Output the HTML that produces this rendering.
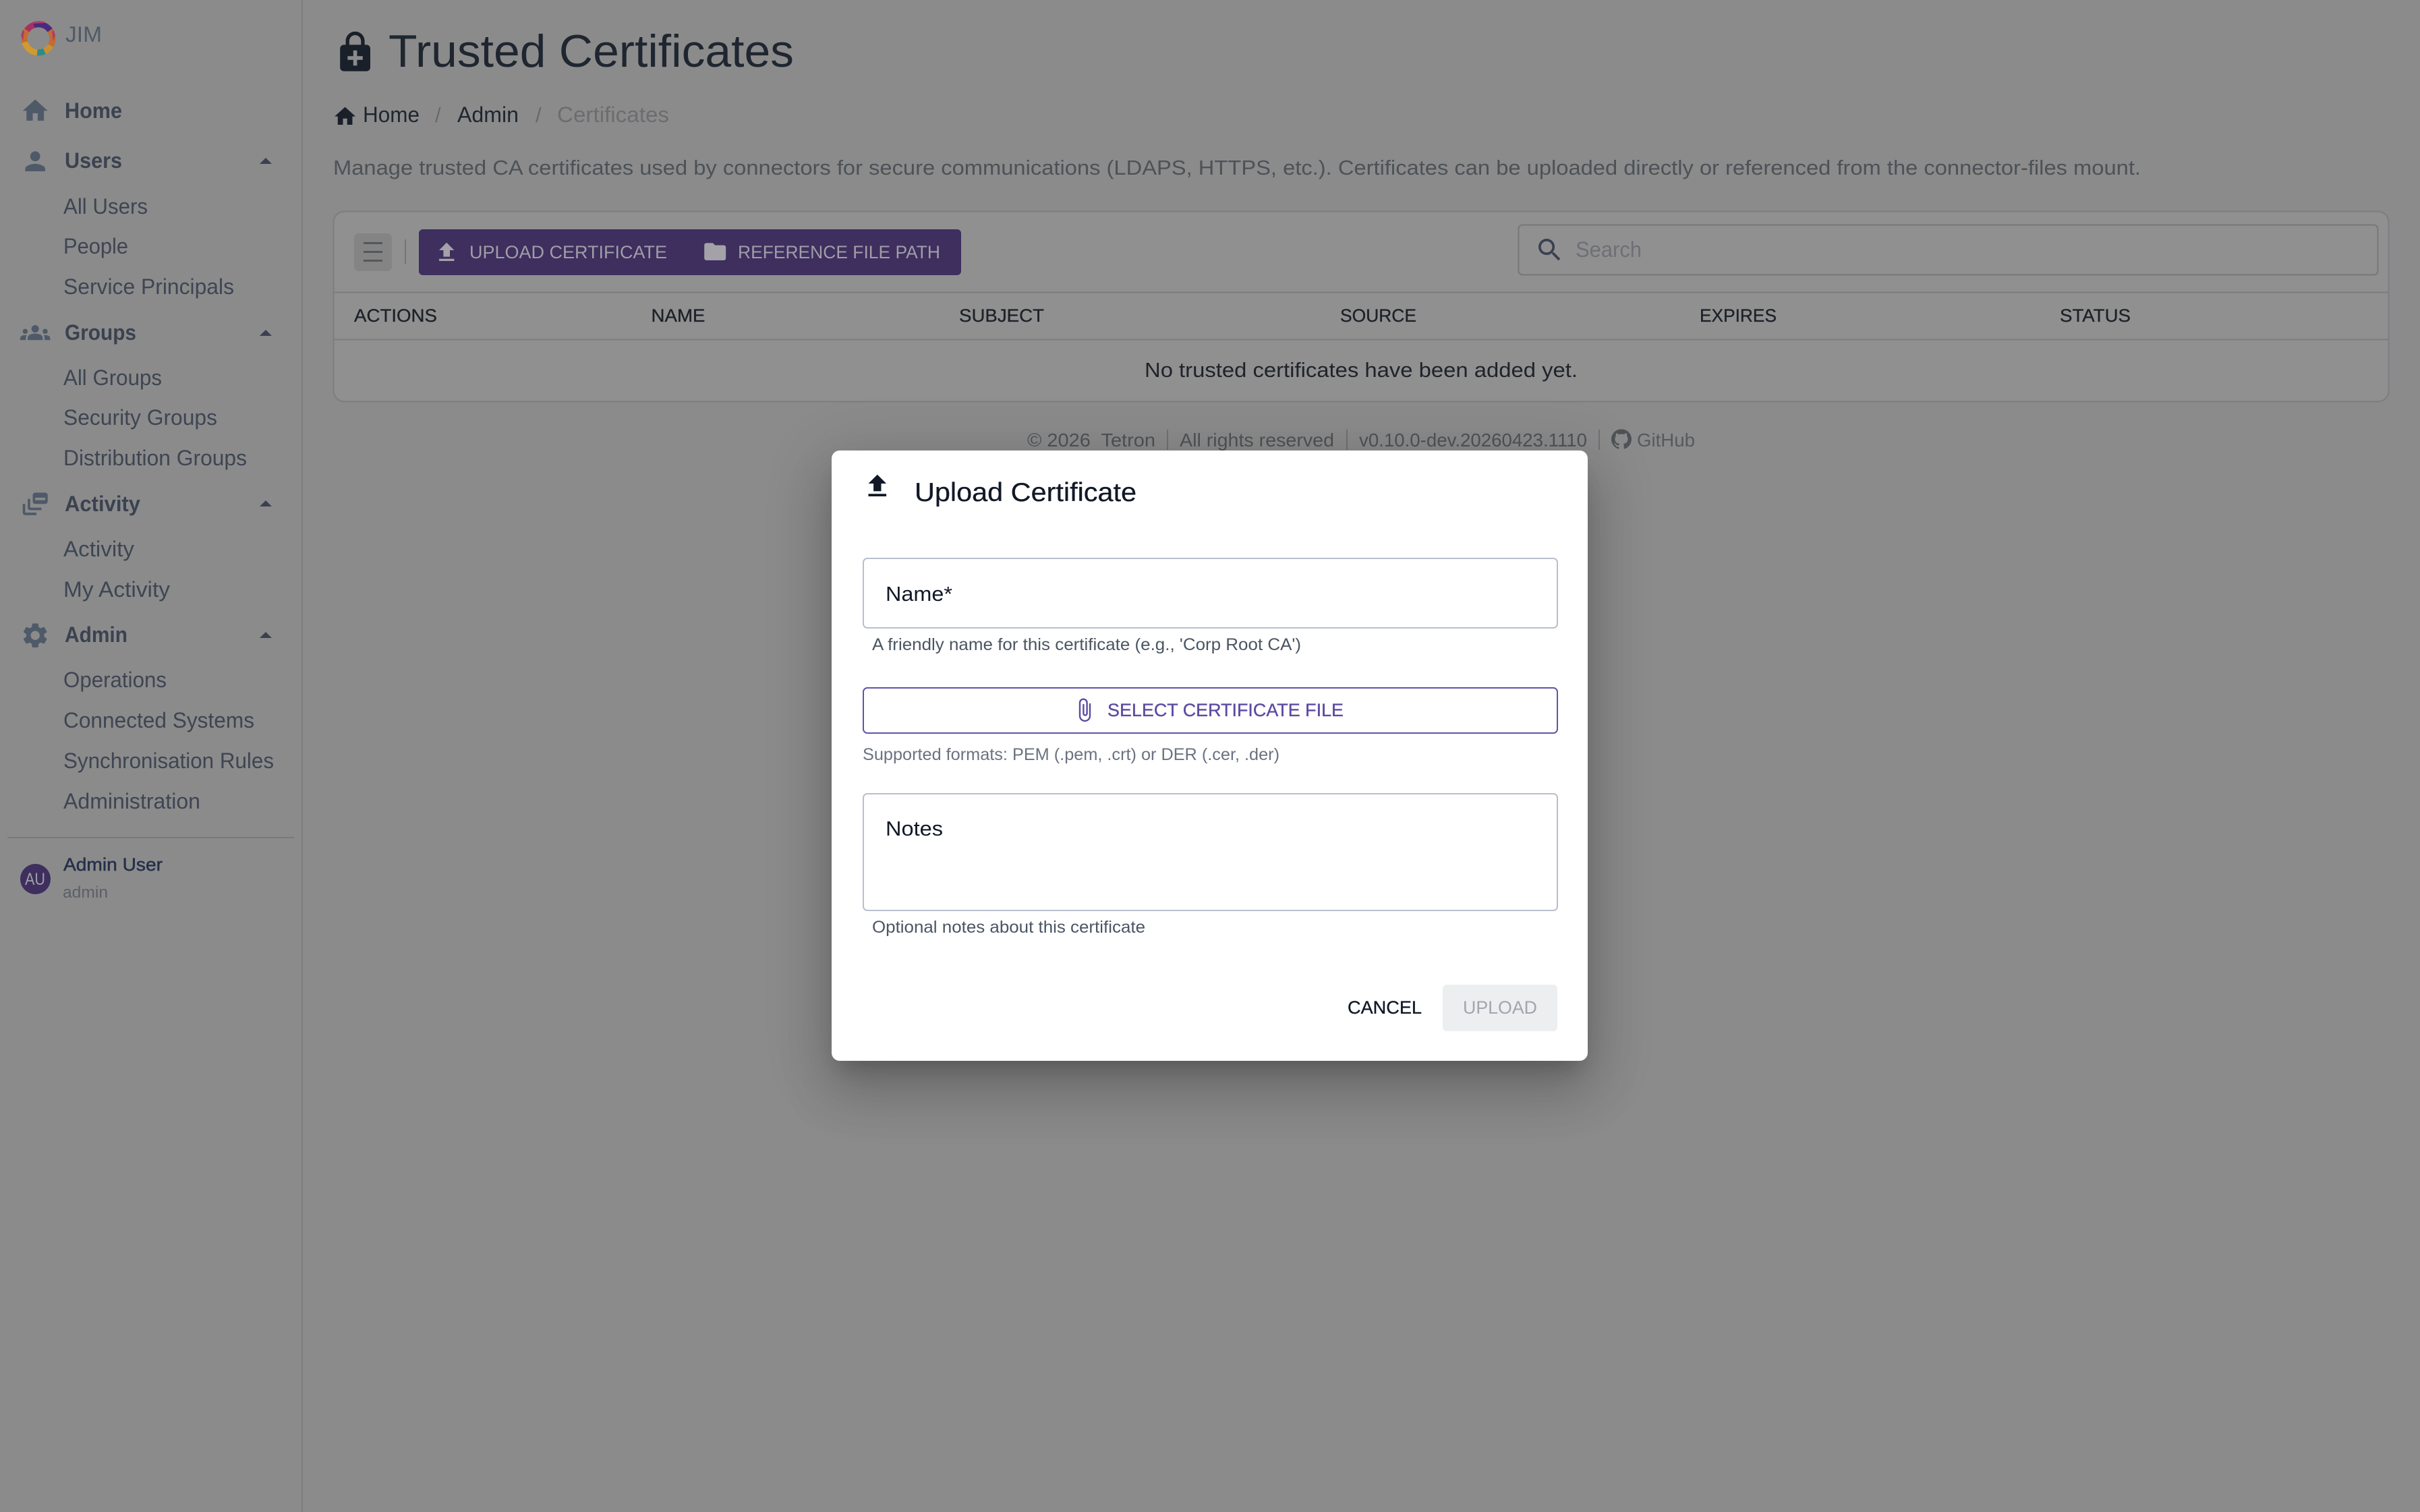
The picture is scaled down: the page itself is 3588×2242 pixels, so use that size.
<!DOCTYPE html>
<html lang="en">
<head>
<meta charset="utf-8">
<title>Trusted Certificates</title>
<style>
html,body{margin:0;padding:0;width:3588px;height:2242px;overflow:hidden;background:#8b8b8b}
svg{position:absolute;left:0;top:0;display:block}
text{font-family:"Liberation Sans",Arial,sans-serif;white-space:pre}
.modal{position:absolute;left:1233px;top:668px;width:1121px;height:905px;background:#fff;border-radius:12px;box-shadow:0 22px 30px -14px rgba(0,0,0,.2),0 48px 76px 6px rgba(0,0,0,.14),0 18px 92px 16px rgba(0,0,0,.12)}
.modal svg{left:-1233px;top:-668px}
.n{font-size:32px;fill:#3e4553}
.h{font-size:32px;font-weight:700;fill:#3b4250}
.i{fill:#4f5a68}
.c{fill:#3a4050}
.th{font-size:27px;fill:#1d2128;stroke:#1d2128;stroke-width:.35}
.ft{font-size:28px;fill:#4f5357}
.bt{font-size:27px;fill:#a09da6}
</style>
</head>
<body>
<svg width="3588" height="2242" viewBox="0 0 3588 2242" xmlns="http://www.w3.org/2000/svg">
  <rect width="3588" height="2242" fill="#8b8b8b"/>
  <g id="sidebar">
    <rect x="447" y="0" width="2" height="2242" fill="#7b7d82"/>
    <g fill="none" stroke-width="9">
      <path d="M49.800 37.300 A21 21 0 0 1 74.200 45" stroke="#4a2a80"/>
      <path d="M74.200 45 A21 21 0 0 1 75.200 67.500" stroke="#c46a35"/>
      <path d="M75.200 67.500 A21 21 0 0 1 65.900 76" stroke="#c8922f"/>
      <path d="M65.900 76 A21 21 0 0 1 55.200 77.900" stroke="#2f8a8a"/>
      <path d="M55.200 77.900 A21 21 0 0 1 36.700 62.400" stroke="#d09a30"/>
      <path d="M36.700 62.400 A21 21 0 0 1 39.800 45" stroke="#c86a30"/>
      <path d="M39.800 45 A21 21 0 0 1 49.800 37.300" stroke="#a8305f"/>
    </g>
    <path d="M47 33q9-3 18-1l3 2-21 1zM31 52l3-8 2 3-2 14zM82 52l-3-8-2 3 2 14z" fill="#a8406a"/>
    <text x="97" y="62" font-size="32" fill="#4f5a68" textLength="54" lengthAdjust="spacingAndGlyphs">JIM</text>

    <path class="i" transform="translate(30 142) scale(1.85)" d="M10 20v-6h4v6h5v-8h3L12 3 2 12h3v8z"/>
    <text class="h" x="96" y="175" textLength="85" lengthAdjust="spacingAndGlyphs">Home</text>

    <path class="i" transform="translate(30 217) scale(1.85)" d="M12 12c2.21 0 4-1.79 4-4s-1.79-4-4-4-4 1.79-4 4 1.790 4 4 4zm0 2c-2.67 0-8 1.34-8 4v2h16v-2c0-2.66-5.33-4-8-4z"/>
    <text class="h" x="96" y="249" textLength="85" lengthAdjust="spacingAndGlyphs">Users</text>
    <path class="c" d="M385 243l9-9 9 9z"/>
    <text class="n" x="94" y="317" textLength="125" lengthAdjust="spacingAndGlyphs">All Users</text>
    <text class="n" x="94" y="376" textLength="96" lengthAdjust="spacingAndGlyphs">People</text>
    <text class="n" x="94" y="436" textLength="253" lengthAdjust="spacingAndGlyphs">Service Principals</text>

    <path class="i" transform="translate(30 471) scale(1.85)" d="M12 12.75c1.63 0 3.07.39 4.24.9 1.08.48 1.76 1.56 1.76 2.73V18H6v-1.61c0-1.18.68-2.26 1.76-2.73 1.17-.52 2.61-.91 4.24-.91zM4 13c1.1 0 2-.9 2-2s-.9-2-2-2-2 .9-2 2 .9 2 2 2zm1.13 1.1c-.37-.06-.74-.1-1.13-.1-.99 0-1.93.21-2.78.58C.48 14.9 0 15.62 0 16.43V18h4.5v-1.61c0-.83.23-1.61.63-2.29zM20 13c1.1 0 2-.9 2-2s-.9-2-2-2-2 .9-2 2 .9 2 2 2zm4 3.43c0-.81-.48-1.53-1.22-1.85-.85-.37-1.79-.58-2.78-.58-.39 0-.76.04-1.13.1.4.68.63 1.46.63 2.29V18H24v-1.57zM12 6c1.66 0 3 1.34 3 3s-1.34 3-3 3-3-1.34-3-3 1.34-3 3-3z"/>
    <text class="h" x="96" y="504" textLength="106" lengthAdjust="spacingAndGlyphs">Groups</text>
    <path class="c" d="M385 498l9-9 9 9z"/>
    <text class="n" x="94" y="571" textLength="146" lengthAdjust="spacingAndGlyphs">All Groups</text>
    <text class="n" x="94" y="630" textLength="228" lengthAdjust="spacingAndGlyphs">Security Groups</text>
    <text class="n" x="94" y="690" textLength="272" lengthAdjust="spacingAndGlyphs">Distribution Groups</text>

    <path class="i" transform="translate(30 725) scale(1.85)" d="M8 8H6v7c0 1.1.9 2 2 2h9v-2H8V8zm12-5h-8c-1.1 0-2 .9-2 2v5c0 1.1.9 2 2 2h8c1.1 0 2-.9 2-2V5c0-1.1-.9-2-2-2zm0 6h-8V7h8v2zM4 12H2v7c0 1.1.9 2 2 2h9v-2H4v-7z"/>
    <text class="h" x="96" y="758" textLength="112" lengthAdjust="spacingAndGlyphs">Activity</text>
    <path class="c" d="M385 751l9-9 9 9z"/>
    <text class="n" x="94" y="825" textLength="105" lengthAdjust="spacingAndGlyphs">Activity</text>
    <text class="n" x="94" y="885" textLength="158" lengthAdjust="spacingAndGlyphs">My Activity</text>

    <path class="i" transform="translate(30 920) scale(1.85)" d="M19.14 12.94c.04-.3.06-.61.06-.94 0-.32-.02-.64-.07-.94l2.03-1.58c.18-.14.23-.41.12-.61l-1.92-3.32c-.12-.22-.37-.29-.59-.22l-2.39.96c-.5-.38-1.03-.7-1.62-.94l-.36-2.54c-.04-.24-.24-.41-.48-.41h-3.84c-.24 0-.43.17-.47.41l-.36 2.54c-.59.24-1.13.57-1.62.94l-2.39-.96c-.22-.08-.47 0-.59.22L2.74 8.87c-.12.21-.08.47.12.61l2.03 1.58c-.05.3-.09.63-.09.94s.02.64.07.94l-2.03 1.58c-.18.14-.23.41-.12.61l1.92 3.32c.12.22.37.29.59.22l2.39-.96c.5.38 1.03.7 1.62.94l.36 2.54c.05.24.24.41.48.41h3.84c.24 0 .44-.17.47-.41l.36-2.54c.59-.24 1.13-.56 1.62-.94l2.39.96c.22.08.47 0 .59-.22l1.92-3.32c.12-.22.07-.47-.12-.61l-2.01-1.58zM12 15.6c-1.98 0-3.6-1.62-3.6-3.6s1.62-3.6 3.6-3.6 3.6 1.62 3.6 3.6-1.62 3.6-3.6 3.6z"/>
    <text class="h" x="96" y="952" textLength="93" lengthAdjust="spacingAndGlyphs">Admin</text>
    <path class="c" d="M385 946l9-9 9 9z"/>
    <text class="n" x="94" y="1019" textLength="153" lengthAdjust="spacingAndGlyphs">Operations</text>
    <text class="n" x="94" y="1079" textLength="283" lengthAdjust="spacingAndGlyphs">Connected Systems</text>
    <text class="n" x="94" y="1139" textLength="312" lengthAdjust="spacingAndGlyphs">Synchronisation Rules</text>
    <text class="n" x="94" y="1199" textLength="203" lengthAdjust="spacingAndGlyphs">Administration</text>

    <rect x="11" y="1241" width="425" height="2" fill="#767a82"/>
    <circle cx="52.500" cy="1303.500" r="22.500" fill="#3e2f5f"/>
    <text x="37" y="1312" font-size="25" fill="#a09da6" textLength="30" lengthAdjust="spacingAndGlyphs">AU</text>
    <text x="94" y="1291" font-size="27" fill="#24304a" stroke="#24304a" stroke-width=".5" textLength="147" lengthAdjust="spacingAndGlyphs">Admin User</text>
    <text x="93" y="1331" font-size="24" fill="#5c5f66" textLength="67" lengthAdjust="spacingAndGlyphs">admin</text>
  </g>

  <g id="header">
    <path transform="translate(493 44) scale(2.8)" fill="#1a2029" d="M18 8h-1V6c0-2.76-2.24-5-5-5S7 3.24 7 6v2H6c-1.1 0-2 .9-2 2v10c0 1.1.9 2 2 2h12c1.1 0 2-.9 2-2V10c0-1.1-.9-2-2-2zM8.9 6c0-1.71 1.39-3.1 3.1-3.1s3.1 1.39 3.1 3.1v2H8.9V6zM16 16h-3v3h-2v-3H8v-2h3v-3h2v3h3v2z"/>
    <text x="576" y="99" font-size="68" fill="#1f2630" textLength="601" lengthAdjust="spacingAndGlyphs">Trusted Certificates</text>

    <path transform="translate(493 154) scale(1.55)" fill="#1a2029" d="M10 20v-6h4v6h5v-8h3L12 3 2 12h3v8z"/>
    <text x="538" y="181" font-size="32" fill="#1f2630" textLength="84" lengthAdjust="spacingAndGlyphs">Home</text>
    <text x="645" y="181" font-size="31" fill="#66696e">/</text>
    <text x="678" y="181" font-size="32" fill="#1f2630" textLength="91" lengthAdjust="spacingAndGlyphs">Admin</text>
    <text x="794" y="181" font-size="31" fill="#66696e">/</text>
    <text x="826" y="181" font-size="32" fill="#6b6d70" textLength="166" lengthAdjust="spacingAndGlyphs">Certificates</text>

    <text x="494" y="259" font-size="31" fill="#4d5257" textLength="2680" lengthAdjust="spacingAndGlyphs">Manage trusted CA certificates used by connectors for secure communications (LDAPS, HTTPS, etc.). Certificates can be uploaded directly or referenced from the connector-files mount.</text>
  </g>

  <g id="table">
    <rect x="494.500" y="313.500" width="3047" height="282" rx="16" fill="#909090" stroke="#7b7d83" stroke-width="2"/>
    <rect x="525" y="346" width="56" height="56" rx="7" fill="#848484"/>
    <g fill="#54575b">
      <rect x="539" y="359" width="28" height="3"/>
      <rect x="539" y="372" width="28" height="3"/>
      <rect x="539" y="385" width="28" height="3"/>
    </g>
    <rect x="600" y="355" width="2" height="36" fill="#737579"/>
    <rect x="621" y="340" width="804" height="68" rx="6" fill="#3e2f5f"/>
    <path transform="translate(643 355) scale(1.6)" fill="#a4a2a8" d="M9 16h6v-6h4l-7-7-7 7h4v6zm-4 2h14v2H5v-2z"/>
    <text class="bt" x="696" y="383" textLength="293" lengthAdjust="spacingAndGlyphs">UPLOAD CERTIFICATE</text>
    <path transform="translate(1041 354) scale(1.6)" fill="#a4a2a8" d="M10 4H4c-1.1 0-1.99.9-1.99 2L2 18c0 1.1.9 2 2 2h16c1.1 0 2-.9 2-2V8c0-1.1-.9-2-2-2h-8l-2-2z"/>
    <text class="bt" x="1094" y="383" textLength="300" lengthAdjust="spacingAndGlyphs">REFERENCE FILE PATH</text>

    <rect x="2251.500" y="333.500" width="1274" height="74" rx="6" fill="none" stroke="#75777c" stroke-width="2"/>
    <path class="c" transform="translate(2275.500 348.500) scale(1.85)" d="M15.5 14h-.79l-.28-.27C15.41 12.59 16 11.11 16 9.5 16 5.91 13.09 3 9.5 3S3 5.91 3 9.5 5.91 16 9.5 16c1.61 0 3.09-.59 4.23-1.57l.27.28v.79l5 4.99L20.49 19l-4.99-5zm-6 0C7.01 14 5 11.99 5 9.5S7.01 5 9.5 5 14 7.01 14 9.5 11.99 14 9.500 14z"/>
    <text x="2336" y="381" font-size="32" fill="#6e7075" textLength="98" lengthAdjust="spacingAndGlyphs">Search</text>

    <rect x="495" y="432.500" width="3046" height="2" fill="#7b7d83"/>
    <text class="th" x="525" y="477" textLength="123" lengthAdjust="spacingAndGlyphs">ACTIONS</text>
    <text class="th" x="965.500" y="477" textLength="80" lengthAdjust="spacingAndGlyphs">NAME</text>
    <text class="th" x="1422" y="477" textLength="126" lengthAdjust="spacingAndGlyphs">SUBJECT</text>
    <text class="th" x="1987" y="477" textLength="113" lengthAdjust="spacingAndGlyphs">SOURCE</text>
    <text class="th" x="2520" y="477" textLength="114" lengthAdjust="spacingAndGlyphs">EXPIRES</text>
    <text class="th" x="3054" y="477" textLength="105" lengthAdjust="spacingAndGlyphs">STATUS</text>
    <rect x="495" y="502.500" width="3046" height="2" fill="#7b7d83"/>
    <text x="1697" y="559" font-size="31" fill="#1f2329" textLength="642" lengthAdjust="spacingAndGlyphs">No trusted certificates have been added yet.</text>
  </g>

  <g id="footer">
    <text class="ft" x="1523" y="662" textLength="190" lengthAdjust="spacingAndGlyphs">© 2026  Tetron</text>
    <rect x="1730" y="637" width="2" height="30" fill="#6f7176"/>
    <text class="ft" x="1749" y="662" textLength="229" lengthAdjust="spacingAndGlyphs">All rights reserved</text>
    <rect x="1996" y="637" width="2" height="30" fill="#6f7176"/>
    <text class="ft" x="2015" y="662" textLength="338" lengthAdjust="spacingAndGlyphs">v0.10.0-dev.20260423.1110</text>
    <rect x="2370" y="637" width="2" height="30" fill="#6f7176"/>
    <path transform="translate(2389 636) scale(1.25)" fill="#4f5357" d="M12 .297c-6.63 0-12 5.373-12 12 0 5.303 3.438 9.8 8.205 11.385.6.113.82-.258.82-.577 0-.285-.01-1.04-.015-2.04-3.338.724-4.042-1.61-4.042-1.61C4.422 18.07 3.633 17.7 3.633 17.7c-1.087-.744.084-.729.084-.729 1.205.084 1.838 1.236 1.838 1.236 1.07 1.835 2.809 1.305 3.495.998.108-.776.417-1.305.76-1.605-2.665-.3-5.466-1.332-5.466-5.93 0-1.31.465-2.38 1.235-3.22-.135-.303-.54-1.523.105-3.176 0 0 1.005-.322 3.3 1.23.96-.267 1.98-.399 3-.405 1.02.006 2.04.138 3 .405 2.28-1.552 3.285-1.23 3.285-1.23.645 1.653.24 2.873.12 3.176.765.84 1.23 1.91 1.23 3.22 0 4.61-2.805 5.625-5.475 5.92.42.36.81 1.096.81 2.22 0 1.606-.015 2.896-.015 3.286 0 .315.21.69.825.57C20.565 22.092 24 17.592 24 12.297c0-6.627-5.373-12-12-12"/>
    <text x="2427" y="662" font-size="28" fill="#565a5f" textLength="86" lengthAdjust="spacingAndGlyphs">GitHub</text>
  </g>
</svg>

<div class="modal">
<svg width="3588" height="2242" viewBox="0 0 3588 2242" xmlns="http://www.w3.org/2000/svg">
  <path transform="translate(1278 698) scale(1.9)" fill="#111827" d="M9 16h6v-6h4l-7-7-7 7h4v6zm-4 2h14v2H5v-2z"/>
  <text x="1356" y="743" font-size="39" fill="#111827" stroke="#111827" stroke-width=".3" textLength="329" lengthAdjust="spacingAndGlyphs">Upload Certificate</text>

  <rect x="1280" y="828" width="1029" height="103" rx="6" fill="#fff" stroke="#b8bfcc" stroke-width="2"/>
  <text x="1313" y="891" font-size="31" fill="#111827" textLength="99" lengthAdjust="spacingAndGlyphs">Name*</text>
  <text x="1293" y="964" font-size="25" fill="#4b5563" textLength="636" lengthAdjust="spacingAndGlyphs">A friendly name for this certificate (e.g., 'Corp Root CA')</text>

  <rect x="1280" y="1020" width="1029" height="67" rx="6" fill="#fff" stroke="#6353a8" stroke-width="2"/>
  <path d="M1616 1044V1061.500a7.500 7.500 0 0 1-15 0V1042a5.300 5.300 0 0 1 10.600 0V1058a2.600 2.600 0 0 1-5.200 0V1045" fill="none" stroke="#5c4ba0" stroke-width="2.400" stroke-linecap="round"/>
  <text x="1642" y="1062" font-size="27" fill="#5c4ba0" stroke="#5c4ba0" stroke-width=".35" textLength="350" lengthAdjust="spacingAndGlyphs">SELECT CERTIFICATE FILE</text>
  <text x="1279" y="1127" font-size="25" fill="#6b7280" textLength="618" lengthAdjust="spacingAndGlyphs">Supported formats: PEM (.pem, .crt) or DER (.cer, .der)</text>

  <rect x="1280" y="1177" width="1029" height="173" rx="6" fill="#fff" stroke="#b8bfcc" stroke-width="2"/>
  <text x="1313" y="1239" font-size="31" fill="#111827" textLength="85" lengthAdjust="spacingAndGlyphs">Notes</text>
  <text x="1293" y="1383" font-size="25" fill="#4b5563" textLength="405" lengthAdjust="spacingAndGlyphs">Optional notes about this certificate</text>

  <text x="1998" y="1503" font-size="27" fill="#111827" stroke="#111827" stroke-width=".35" textLength="110" lengthAdjust="spacingAndGlyphs">CANCEL</text>
  <rect x="2139" y="1460" width="170" height="69" rx="6" fill="#eceef0"/>
  <text x="2169" y="1503" font-size="27" fill="#a1a5ad" textLength="110" lengthAdjust="spacingAndGlyphs">UPLOAD</text>
</svg>
</div>
</body>
</html>
